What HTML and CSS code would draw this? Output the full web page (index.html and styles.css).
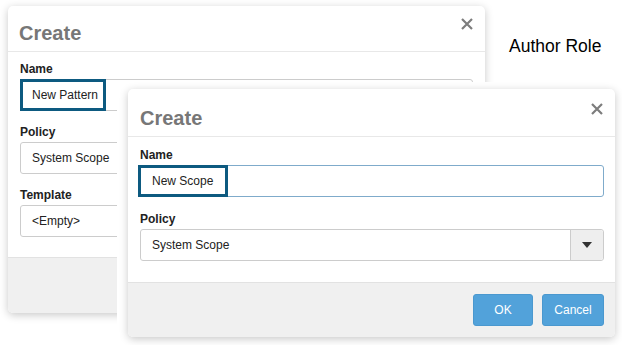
FILE: index.html
```html
<!DOCTYPE html>
<html lang="en">

<head>
    <meta charset="UTF-8">
    <title>Create dialogs</title>
    <link rel="stylesheet" href="styles.css">
</head>

<body>
    <div class="stage">

        <!-- Back dialog -->
        <div class="dialog dialog-back">
            <div class="dialog-header">
                <h2 class="dialog-title">Create</h2>
                <span class="close">
                    <svg width="12" height="12" viewBox="0 0 12 12"><path d="M1 1L11 11M11 1L1 11" stroke="#7d7d7d" stroke-width="2.2"/></svg>
                </span>
            </div>
            <div class="dialog-body">
                <label class="field-label">Name</label>
                <div class="input">
                    <span>New Pattern</span>
                    <span class="mark mark-back"></span>
                </div>
                <label class="field-label">Policy</label>
                <div class="select"><span>System Scope</span></div>
                <label class="field-label">Template</label>
                <div class="select"><span>&lt;Empty&gt;</span></div>
            </div>
            <div class="dialog-footer"></div>
        </div>

        <div class="author">Author Role</div>

        <!-- Front dialog, pasted with its own white margin -->
        <div class="paste">
            <div class="dialog dialog-front">
                <div class="dialog-header">
                    <h2 class="dialog-title">Create</h2>
                    <span class="close">
                        <svg width="12" height="12" viewBox="0 0 12 12"><path d="M1 1L11 11M11 1L1 11" stroke="#7d7d7d" stroke-width="2.2"/></svg>
                    </span>
                </div>
                <div class="dialog-body">
                    <label class="field-label">Name</label>
                    <div class="input input-focus">
                        <span>New Scope</span>
                        <span class="mark mark-front"></span>
                    </div>
                    <label class="field-label">Policy</label>
                    <div class="select">
                        <span>System Scope</span>
                        <span class="caret"><svg width="10" height="6" viewBox="0 0 10 6"><path d="M0 0H10L5 6Z" fill="#333"/></svg></span>
                    </div>
                </div>
                <div class="dialog-footer">
                    <button class="btn btn-ok">OK</button>
                    <button class="btn btn-cancel">Cancel</button>
                </div>
            </div>
        </div>

    </div>
</body>

</html>
```

FILE: styles.css
```css
/* Colours */
:root {
    --bg-color: #FFFFFF;
    --title-color: #777777;
    --text-color: #333333;
    --footer-bg: #f0f0f0;
    --line-color: #e8e8e8;
    --field-border: #cccccc;
    --mark-color: #0d5a80;
    --btn-color: #52a2da;
}

body {
    margin: 0;
    background: var(--bg-color);
    font-family: "Liberation Sans", Arial, sans-serif;
    color: var(--text-color);
}

.stage {
    position: relative;
    width: 622px;
    height: 345px;
    overflow: hidden;
}

/* Dialog windows */
.dialog {
    position: absolute;
    display: flex;
    flex-direction: column;
    background: var(--bg-color);
    border-radius: 5px;
    box-shadow: 0 2px 9px rgba(0, 0, 0, 0.22);
    overflow: hidden;
}

.dialog-back {
    left: 8px;
    top: 6px;
    width: 477px;
    height: 307px;
}

.paste {
    position: absolute;
    left: 117px;
    top: 82px;
    width: 505px;
    height: 263px;
    background: var(--bg-color);
}

.dialog-front {
    left: 11px;
    top: 7px;
    width: 487px;
    height: 248px;
}

.dialog-header {
    display: flex;
    justify-content: space-between;
    align-items: flex-start;
    height: 45px;
    padding: 0 12px 0 11px;
    border-bottom: 1px solid var(--line-color);
}

.dialog-front .dialog-header {
    height: 47px;
    padding-left: 12px;
}

.dialog-title {
    margin: 16px 0 0;
    font-size: 20px;
    line-height: 23px;
    font-weight: bold;
    color: var(--title-color);
}

.dialog-front .dialog-title {
    margin-top: 18px;
}

.close {
    margin-top: 10px;
}

.dialog-front .close {
    margin-top: 12px;
}

.dialog-body {
    display: flex;
    flex-direction: column;
    padding: 9px 12px 20px 12px;
}

.dialog-front .dialog-body {
    padding: 10px 11px 21px 12px;
}

.field-label {
    font-size: 12px;
    font-weight: bold;
    line-height: 16px;
    color: #222;
    margin-bottom: 2px;
}

.input, .select {
    position: relative;
    display: flex;
    align-items: center;
    height: 30px;
    border: 1px solid var(--field-border);
    border-radius: 3px;
    padding-left: 11px;
    font-size: 12px;
    color: #222;
    margin-bottom: 13px;
}

.dialog-front .input {
    margin-bottom: 14px;
}

.dialog-body > :last-child {
    margin-bottom: 0;
}

.input-focus {
    border-color: #7fabcb;
}

.caret {
    position: absolute;
    right: 0;
    top: 0;
    bottom: 0;
    width: 32px;
    display: flex;
    align-items: center;
    justify-content: center;
    background: #eeeeee;
    border-left: 1px solid var(--field-border);
    border-radius: 0 3px 3px 0;
}

/* Annotation boxes over the name fields */
.mark {
    position: absolute;
    top: -1px;
    border: 3px solid var(--mark-color);
    box-sizing: border-box;
    height: 32px;
}

.mark-back {
    left: -1px;
    width: 86px;
}

.mark-front {
    left: -3px;
    width: 90px;
}

.dialog-footer {
    flex: 1;
    display: flex;
    justify-content: flex-end;
    align-items: flex-start;
    gap: 9px;
    padding: 11px 11px 0 0;
    background: var(--footer-bg);
    border-top: 1px solid #e2e2e2;
}

.btn {
    height: 32px;
    border: 1px solid #4a98cf;
    border-radius: 3px;
    background: var(--btn-color);
    color: #fff;
    font-family: "Liberation Sans", Arial, sans-serif;
    font-size: 12px;
}

.btn-ok {
    width: 60px;
}

.btn-cancel {
    width: 62px;
}

.author {
    position: absolute;
    left: 509px;
    top: 36px;
    font-size: 17.5px;
    color: #000;
}
```
